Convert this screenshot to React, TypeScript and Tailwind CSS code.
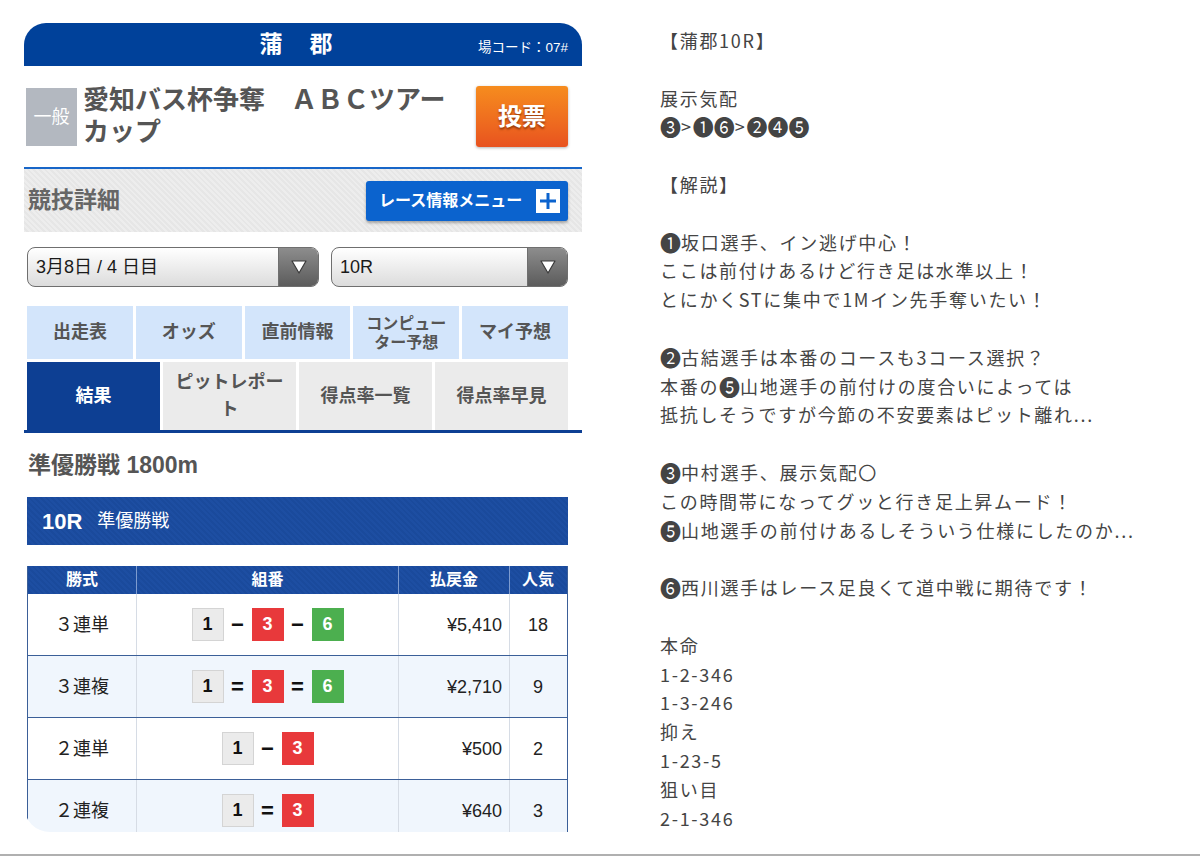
import React from "react";

const jp = "font-['Liberation_Sans','Noto_Sans_CJK_JP',sans-serif]";

function NumBox({ n }: { n: number }) {
  const cls =
    n === 1
      ? "bg-[#ebebeb] text-[#111] border border-[#d4d4d4]"
      : n === 3
      ? "bg-[#e8393b] text-white"
      : "bg-[#4caf4f] text-white";
  return (
    <div className={`w-[32px] h-[33px] flex items-center justify-center text-[18px] font-bold ${cls}`}>{n}</div>
  );
}

function Sep({ s }: { s: string }) {
  return <div className="w-[28px] flex items-center justify-center text-[22px] font-bold text-[#111]">{s}</div>;
}

const rows = [
  { k: "３連単", combo: [1, "−", 3, "−", 6], pay: "¥5,410", pop: "18", bg: "bg-white" },
  { k: "３連複", combo: [1, "=", 3, "=", 6], pay: "¥2,710", pop: "9", bg: "bg-[#f0f6fd]" },
  { k: "２連単", combo: [1, "−", 3], pay: "¥500", pop: "2", bg: "bg-white" },
  { k: "２連複", combo: [1, "=", 3], pay: "¥640", pop: "3", bg: "bg-[#f0f6fd]" },
];

function Select({ label, w }: { label: string; w: string }) {
  return (
    <div className={`${w} h-[40px] rounded-[8px] border border-[#6f6f6f] overflow-hidden flex bg-gradient-to-b from-white to-[#dcdcdc]`}>
      <div className="flex-1 flex items-center pl-[8px] text-[18px] text-[#1a1a1a]">{label}</div>
      <div className="w-[40px] border-l border-[#6f6f6f] bg-gradient-to-b from-[#8d8d8d] to-[#5c5c5c] flex items-center justify-center">
        <svg width="18" height="16" viewBox="0 0 18 16">
          <polygon points="2,2 16,2 9,14" fill="white" stroke="#3a3a3a" strokeWidth="1.2" strokeLinejoin="round" />
        </svg>
      </div>
    </div>
  );
}

const stripe =
  "bg-[repeating-linear-gradient(45deg,#ededed_0px,#ededed_2px,#e6e6e6_2px,#e6e6e6_4px)]";
const blueStripe =
  "bg-[repeating-linear-gradient(45deg,#1d4ea2_0px,#1d4ea2_2px,#1a4a9c_2px,#1a4a9c_4px)]";

const rightLines: string[] = [
  "【蒲郡10R】",
  "",
  "展示気配",
  "❸>❶❻>❷❹❺",
  "",
  "【解説】",
  "",
  "❶坂口選手、イン逃げ中心！",
  "ここは前付けあるけど行き足は水準以上！",
  "とにかくSTに集中で1Mイン先手奪いたい！",
  "",
  "❷古結選手は本番のコースも3コース選択？",
  "本番の❺山地選手の前付けの度合いによっては",
  "抵抗しそうですが今節の不安要素はピット離れ...",
  "",
  "❸中村選手、展示気配〇",
  "この時間帯になってグッと行き足上昇ムード！",
  "❺山地選手の前付けあるしそういう仕様にしたのか...",
  "",
  "❻西川選手はレース足良くて道中戦に期待です！",
  "",
  "本命",
  "1-2-346",
  "1-3-246",
  "抑え",
  "1-23-5",
  "狙い目",
  "2-1-346",
];

function Line({ text }: { text: string }) {
  if (!text) return <>{"\u00a0"}</>;
  const parts = Array.from(text);
  return (
    <>
      {parts.map((c, i) =>
        /[\u2776-\u277f]/.test(c) ? (
          <span key={i} className="text-[21px] leading-[0] tracking-[-1px] mr-[1px] align-[-1px]">
            {c}
          </span>
        ) : (
          <React.Fragment key={i}>{c}</React.Fragment>
        )
      )}
    </>
  );
}

export default function App() {
  return (
    <div className={`w-[1200px] h-[857px] bg-white relative overflow-hidden ${jp}`}>
      <div className="flex">
        {/* Left panel */}
        <div className="ml-[24px] mt-[23px] w-[558px] h-[809px] rounded-t-[22px] rounded-bl-[26px] overflow-hidden flex flex-col bg-white">
          {/* header */}
          <div className="h-[43px] bg-[#00419a] flex items-center relative shrink-0">
            <div className="flex-1 text-center text-white font-bold text-[23px] tracking-[2px] pr-[12px]">蒲　郡</div>
            <div className="absolute right-[14px] top-[15px] text-white text-[13.5px]">場コード：07#</div>
          </div>
          {/* title row */}
          <div className="h-[101px] flex items-start pl-[2px] pr-[14px] shrink-0">
            <div className="mt-[22px] w-[51px] h-[58px] bg-[#b3b8c0] flex items-center justify-center text-white text-[18px]">一般</div>
            <div className="ml-[6px] mt-[18px] w-[380px] text-[26px] leading-[32px] font-bold text-[#555]">
              愛知バス杯争奪　ＡＢＣツアーカップ
            </div>
            <div className="ml-auto mt-[20px] w-[92px] h-[61px] rounded-[3px] bg-gradient-to-b from-[#f68c1e] to-[#e8521f] shadow-[0_1px_3px_rgba(0,0,0,0.3)] flex items-center justify-center text-white font-bold text-[24px] [text-shadow:0_2px_2px_rgba(120,40,0,0.7)]">
              投票
            </div>
          </div>
          {/* 競技詳細 */}
          <div className="h-[2px] bg-[#1866c8] shrink-0" />
          <div className={`h-[63px] ${stripe} flex items-center pl-[4px] pr-[14px] shrink-0`}>
            <div className="text-[23px] font-bold text-[#666]">競技詳細</div>
            <div className="ml-auto w-[202px] h-[40px] rounded-[3px] bg-[#0b63ce] shadow-[0_2px_3px_rgba(0,0,0,0.3)] flex items-center pl-[13px] pr-[8px]">
              <span className="text-white font-bold text-[16px]">レース情報メニュー</span>
              <div className="ml-auto w-[24px] h-[24px] bg-white flex items-center justify-center">
                <svg width="18" height="18" viewBox="0 0 18 18">
                  <rect x="7.5" y="1" width="3" height="16" fill="#0b63ce" />
                  <rect x="1" y="7.5" width="16" height="3" fill="#0b63ce" />
                </svg>
              </div>
            </div>
          </div>
          {/* selects */}
          <div className="flex gap-[12px] pl-[3px] pr-[14px] mt-[15px] shrink-0">
            <Select label="3月8日 / 4 日目" w="w-[292px]" />
            <Select label="10R" w="w-[237px]" />
          </div>
          {/* tabs */}
          <div className="mt-[19px] pl-[3px] pr-[14px] shrink-0">
            <div className="grid grid-cols-5 gap-[3px] h-[53px]">
              {["出走表", "オッズ", "直前情報", "", "マイ予想"].map((t, i) => (
                <div key={i} className="bg-[#d3e5fb] flex items-center justify-center text-center font-bold text-[#555] text-[18px]">
                  {i === 3 ? (
                    <span className="text-[16px] leading-[19px]">コンピュー<br />ター予想</span>
                  ) : (
                    t
                  )}
                </div>
              ))}
            </div>
            <div className="grid grid-cols-4 gap-[3px] h-[68px] mt-[3px]">
              <div className="bg-[#0d3f93] flex items-center justify-center text-white font-bold text-[18px]">結果</div>
              <div className="bg-[#ebebeb] flex items-center justify-center text-center font-bold text-[#555] text-[18px] leading-[27px]">
                <span>ピットレポー<br />ト</span>
              </div>
              <div className="bg-[#ebebeb] flex items-center justify-center font-bold text-[#555] text-[18px]">得点率一覧</div>
              <div className="bg-[#ebebeb] flex items-center justify-center font-bold text-[#555] text-[18px]">得点率早見</div>
            </div>
          </div>
          <div className="h-[3px] bg-[#0d3f93] shrink-0" />
          {/* race title */}
          <div className="h-[64px] flex items-center pl-[4px] text-[23px] font-bold text-[#555] shrink-0">準優勝戦 1800m</div>
          <div className="pl-[3px] pr-[14px] shrink-0">
            <div className={`h-[48px] ${blueStripe} flex items-center pl-[15px] text-white`}>
              <span className="font-bold text-[22px]">10R</span>
              <span className="ml-[15px] text-[18px]">準優勝戦</span>
            </div>
          </div>
          {/* table */}
          <div className="mt-[21px] pl-[3px] pr-[14px]">
            <div className="border-x-[1.5px] border-[#3b5f98]">
              <div className={`h-[28px] ${blueStripe} grid grid-cols-[109px_262px_111px_56px] text-white font-bold text-[16px]`}>
                <div className="flex items-center justify-center border-r border-[#7d9bcf]">勝式</div>
                <div className="flex items-center justify-center border-r border-[#7d9bcf]">組番</div>
                <div className="flex items-center justify-center border-r border-[#7d9bcf]">払戻金</div>
                <div className="flex items-center justify-center">人気</div>
              </div>
              {rows.map((r, i) => (
                <div key={i} className={`h-[62px] ${r.bg} grid grid-cols-[109px_262px_111px_56px] border-b-[1.5px] border-[#3b5f98] text-[18px] text-[#222]`}>
                  <div className="flex items-center justify-center border-r border-[#d6dce5] pt-[2px]">{r.k}</div>
                  <div className="flex items-center justify-center border-r border-[#d6dce5]">
                    {r.combo.map((c, j) =>
                      typeof c === "number" ? <NumBox key={j} n={c} /> : <Sep key={j} s={c} />
                    )}
                  </div>
                  <div className="flex items-center justify-end pr-[7px] border-r border-[#d6dce5] pt-[2px]">{r.pay}</div>
                  <div className="flex items-center justify-center pt-[2px]">{r.pop}</div>
                </div>
              ))}
            </div>
          </div>
        </div>
        {/* Right text */}
        <div className="ml-[78px] mt-[26px] font-['Noto_Sans_CJK_JP',sans-serif] text-[18px] leading-[28.8px] tracking-[1.7px] text-[#444]">
          {rightLines.map((l, i) => (
            <div key={i} className="h-[28.8px] whitespace-nowrap">
              <Line text={l} />
            </div>
          ))}
        </div>
      </div>
      <div className="absolute left-0 right-0 top-[854px] h-[2px] bg-[#b0b0b0]" />
    </div>
  );
}
